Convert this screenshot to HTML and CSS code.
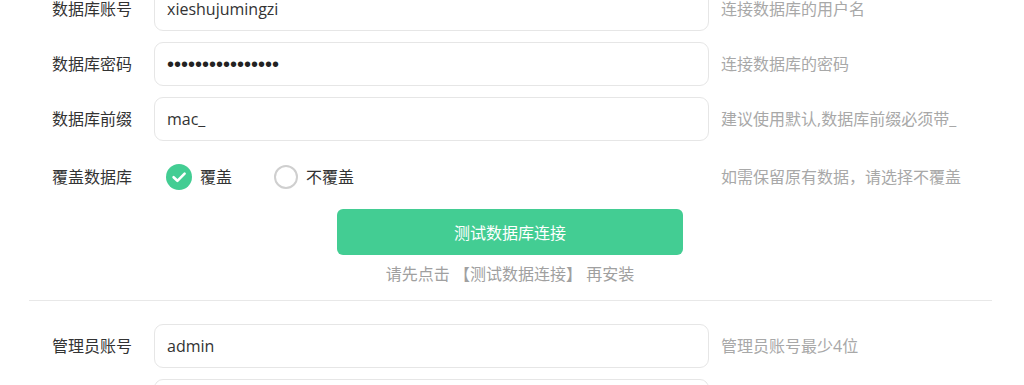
FILE: index.html
```html
<!DOCTYPE html>
<html lang="zh-CN">
<head>
<meta charset="utf-8">
<title>安装</title>
<link rel="stylesheet" href="styles.css">
</head>
<body>
<div class="page">
  <div class="section">
    <div class="row">
      <label class="label">数据库账号</label>
      <input class="field" type="text" value="xieshujumingzi">
      <span class="help">连接数据库的用户名</span>
    </div>
    <div class="row">
      <label class="label">数据库密码</label>
      <input class="field pass" type="password" value="xieshujumingzi12">
      <span class="help">连接数据库的密码</span>
    </div>
    <div class="row">
      <label class="label">数据库前缀</label>
      <input class="field" type="text" value="mac_">
      <span class="help">建议使用默认,数据库前缀必须带_</span>
    </div>
    <div class="row radio-row">
      <label class="label">覆盖数据库</label>
      <div class="radios">
        <span class="radio">
          <span class="dot checked"><svg viewBox="0 0 26 26" width="26" height="26"><circle cx="13" cy="13" r="13" fill="#43cd93"/><path d="M7.6 13.2 L11.4 16.8 L18.6 9.6" fill="none" stroke="#fff" stroke-width="2.6" stroke-linecap="round" stroke-linejoin="round"/></svg></span>
          <span class="rtext">覆盖</span>
        </span>
        <span class="radio">
          <span class="dot empty"></span>
          <span class="rtext">不覆盖</span>
        </span>
      </div>
      <span class="help">如需保留原有数据，请选择不覆盖</span>
    </div>
    <div class="actions">
      <button class="btn" type="button">测试数据库连接</button>
      <p class="tip">请先点击 【测试数据连接】 再安装</p>
    </div>
  </div>
  <hr class="divider">
  <div class="section">
    <div class="row">
      <label class="label">管理员账号</label>
      <input class="field" type="text" value="admin">
      <span class="help">管理员账号最少4位</span>
    </div>
    <div class="row">
      <span class="label"></span>
      <input class="field" type="password" value="">
    </div>
  </div>
</div>
</body>
</html>
```

FILE: styles.css
```css
* { box-sizing: border-box; }
html, body { margin: 0; padding: 0; background: #fff; }
body {
  font-family: "Open Sans", "Noto Sans CJK SC", sans-serif;
  font-size: 16px;
  color: #333;
  overflow: hidden;
}
.page {
  padding: 0 32px 0 29px;
  margin-top: -13px;
}
.row {
  display: flex;
  align-items: center;
  height: 44px;
  margin-bottom: 11px;
}
.label {
  width: 103px;
  flex: none;
  text-align: right;
  color: #333;
  line-height: 24px;
}
.field {
  width: 555px;
  height: 44px;
  flex: none;
  margin-left: 22px;
  border: 1px solid #e6e6e6;
  border-radius: 9px;
  background: #fff;
  padding: 0 12px;
  font-family: "Open Sans", "Noto Sans CJK SC", sans-serif;
  font-size: 16px;
  color: #333;
  outline: none;
}
.field.pass {
  font-family: "Liberation Sans", sans-serif;
  font-size: 20px;
  letter-spacing: 0;
  color: #222;
}
.help {
  margin-left: 12px;
  color: #a8a8a8;
  white-space: nowrap;
  line-height: 24px;
}
.radio-row { height: 50px; margin-bottom: 7px; }
.radios {
  width: 555px;
  flex: none;
  margin-left: 22px;
  display: flex;
  align-items: center;
  padding-left: 12px;
  gap: 42px;
}
.radio { display: flex; align-items: center; gap: 8px; }
.dot { width: 26px; height: 26px; display: flex; align-items: center; justify-content: center; }
.dot svg { display: block; }
.dot.empty {
  width: 24px; height: 24px;
  border: 2px solid #cfcfcf;
  border-radius: 50%;
}
.rtext { color: #333; line-height: 24px; }
.actions {
  display: flex;
  flex-direction: column;
  align-items: center;
  margin-left: -29px;
  margin-right: -28px;
}
.btn {
  width: 346px;
  height: 46px;
  border: none;
  border-radius: 6px;
  background: #43cd93;
  color: #fff;
  font-family: "Open Sans", "Noto Sans CJK SC", sans-serif;
  font-size: 16px;
  cursor: pointer;
}
.tip {
  margin: 7px 0 0;
  line-height: 24px;
  color: #a0a0a0;
}
.divider {
  border: none;
  border-top: 1px solid #e8e8e8;
  margin: 14px 0 23px;
}
```
